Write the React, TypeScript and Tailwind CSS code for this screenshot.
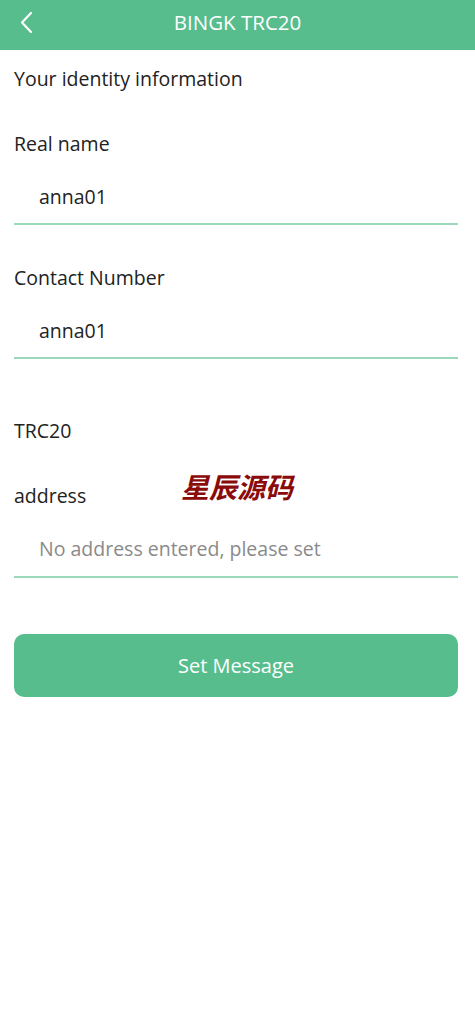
import React from "react";

function Line() {
  return <div className="h-[2px] bg-[#9bd9ba]" />;
}

function Field({ label, value }: { label: string; value: string }) {
  return (
    <div>
      <div className="pt-[40px] pb-[13px]">
        <div className="h-[26px] leading-[26px] text-[19.5px] text-[#222]">{label}</div>
        <div className="mt-[27px] h-[26px] leading-[26px] pl-[25px] text-[19.5px] text-[#222]">{value}</div>
      </div>
      <Line />
    </div>
  );
}

export default function App() {
  return (
    <div className="w-[475px] min-h-[1024px] bg-white" style={{ fontFamily: '"Open Sans", "Noto Sans CJK SC", sans-serif' }}>
      <div className="h-[50px] bg-[#57bd8d] relative flex items-center justify-center">
        <svg className="absolute left-[19px] top-[11px]" width="16" height="24" viewBox="0 0 16 24" fill="none">
          <path d="M12 2 L3 11.5 L12 21" stroke="white" strokeWidth="2.2" strokeLinecap="round" strokeLinejoin="round" />
        </svg>
        <span className="text-white text-[20.5px] leading-[26px] -mt-[6px]">BINGK TRC20</span>
      </div>
      <div className="pl-[14px] pr-[17px]">
        <div className="pt-[16px] h-[41px]">
          <div className="h-[26px] leading-[26px] text-[19.5px] text-[#222]">Your identity information</div>
        </div>
        <Field label="Real name" value="anna01" />
        <Field label="Contact Number" value="anna01" />
        <div className="relative pt-[59px] pb-[14px]">
          <div className="h-[26px] leading-[26px] text-[19.5px] text-[#222]">TRC20</div>
          <div className="mt-[39px] h-[26px] leading-[26px] text-[19.5px] text-[#222]">address</div>
          <div
            className="absolute left-[167px] top-[111px] h-[32px] leading-[32px] text-[28px] font-bold text-[#8b0a0a]"
            style={{ fontFamily: '"Noto Sans CJK SC", sans-serif', fontStyle: 'italic' }}
          >
            星辰源码
          </div>
          <div className="mt-[27px] h-[26px] leading-[26px] pl-[25px] text-[19.5px] text-[#8a8a8a]">
            No address entered, please set
          </div>
        </div>
        <Line />
        <button className="mt-[56px] w-full h-[63px] rounded-[10px] bg-[#57bd8d] text-white text-[20px] flex items-center justify-center">
          Set Message
        </button>
      </div>
    </div>
  );
}
